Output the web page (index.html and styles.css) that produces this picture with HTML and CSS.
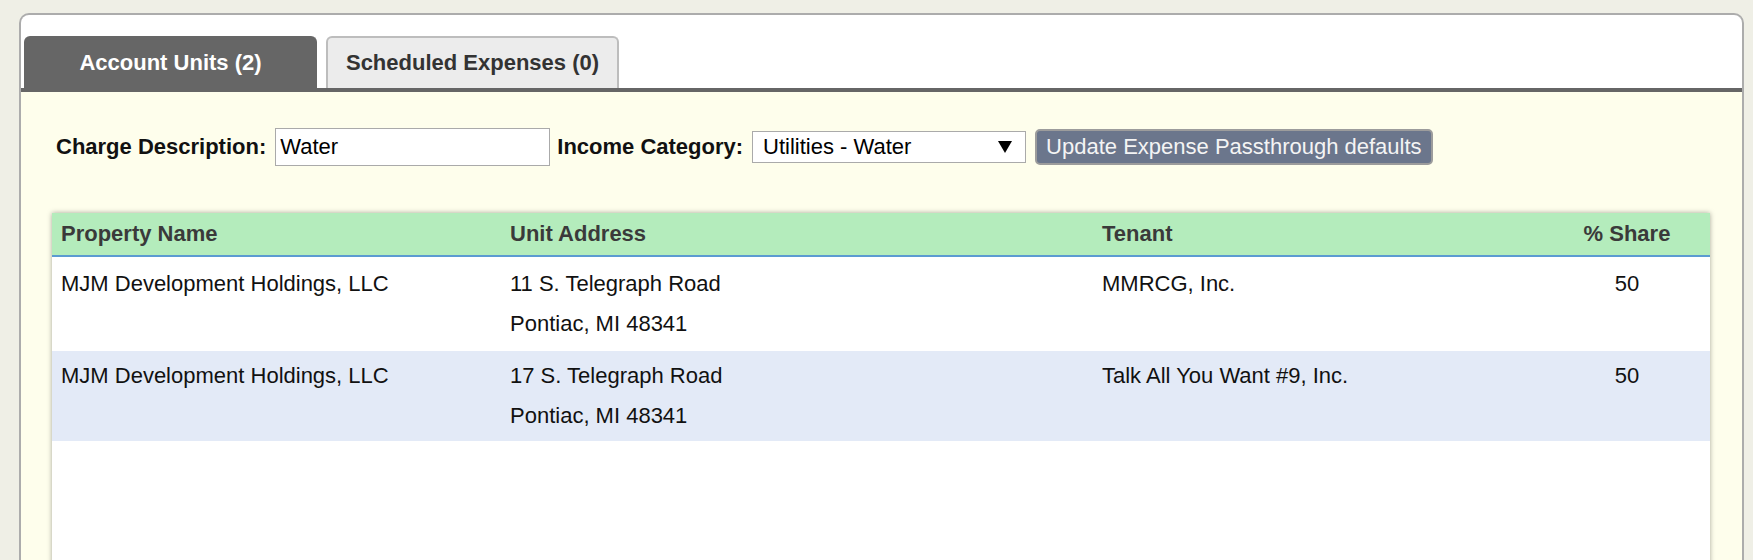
FILE: index.html
```html
<!DOCTYPE html>
<html lang="en">
<head>
<meta charset="utf-8">
<title>Account Units</title>
<link rel="stylesheet" href="styles.css">
</head>
<body>
<div class="panel">
  <div class="tabs">
    <div class="tab active">Account Units (2)</div>
    <div class="tab">Scheduled Expenses (0)</div>
  </div>
  <div class="content">
    <div class="form-row">
      <label class="lbl">Charge Description:</label>
      <input class="text-input" type="text" value="Water">
      <label class="lbl">Income Category:</label>
      <div class="select">
        <span>Utilities - Water</span>
        <svg class="arrow" width="14" height="12" viewBox="0 0 14 12"><polygon points="0,0 14,0 7,12" fill="#000"/></svg>
      </div>
      <button class="btn" type="button">Update Expense Passthrough defaults</button>
    </div>
    <div class="grid">
      <div class="row head">
        <div class="cell">Property Name</div>
        <div class="cell">Unit Address</div>
        <div class="cell">Tenant</div>
        <div class="cell share">% Share</div>
      </div>
      <div class="row body first">
        <div class="cell">MJM Development Holdings, LLC</div>
        <div class="cell">11 S. Telegraph Road<br>Pontiac, MI 48341</div>
        <div class="cell">MMRCG, Inc.</div>
        <div class="cell share">50</div>
      </div>
      <div class="row body alt">
        <div class="cell">MJM Development Holdings, LLC</div>
        <div class="cell">17 S. Telegraph Road<br>Pontiac, MI 48341</div>
        <div class="cell">Talk All You Want #9, Inc.</div>
        <div class="cell share">50</div>
      </div>
    </div>
  </div>
</div>
</body>
</html>
```
FILE: styles.css
```css
html, body {
  margin: 0;
  padding: 0;
}
body {
  background: #efefe6;
  font-family: "Liberation Sans", Arial, sans-serif;
  font-size: 22px;
  overflow: hidden;
}
.panel {
  margin: 13px 9px 0 19px;
  border: 2px solid #acacac;
  border-bottom: none;
  border-radius: 10px 10px 0 0;
  background: #fff;
  overflow: hidden;
}
.tabs {
  display: flex;
  gap: 9px;
  padding: 21px 0 0 3px;
  border-bottom: 4px solid #666;
}
.tab {
  width: 293px;
  height: 52px;
  box-sizing: border-box;
  display: flex;
  align-items: center;
  justify-content: center;
  font-weight: bold;
  color: #333;
  background: #ececec;
  border: 2px solid #bdbdbd;
  border-bottom: none;
  border-radius: 6px 6px 0 0;
}
.tab.active {
  background: #666;
  border-color: #666;
  color: #fff;
}
.content {
  background: #fefeec;
  padding: 36px 32px 0 31px;
}
.form-row {
  display: flex;
  align-items: center;
  padding-left: 4px;
  margin-bottom: 47px;
}
.lbl {
  font-weight: bold;
  color: #111;
  margin-right: 9px;
}
.text-input {
  width: 275px;
  height: 38px;
  box-sizing: border-box;
  border: 1px solid #aaa;
  padding: 0 4px;
  font-family: inherit;
  font-size: 22px;
  color: #000;
  background: #fff;
  margin: 0 7px 0 0;
}
.select {
  width: 274px;
  height: 32px;
  box-sizing: border-box;
  border: 1px solid #aaa;
  background: #fff;
  display: flex;
  align-items: center;
  justify-content: space-between;
  padding: 0 13px 0 10px;
  margin-right: 9px;
  color: #000;
}
.arrow {
  display: block;
}
.btn {
  height: 36px;
  box-sizing: border-box;
  padding: 0 9px;
  border: 2px solid #9c9c9c;
  border-radius: 5px;
  background: #6b768c;
  color: #f4f4f4;
  font-family: inherit;
  font-size: 22px;
  line-height: 1;
}
.grid {
  background: #fff;
  box-shadow: 0 0 5px rgba(0, 0, 0, 0.35);
  min-height: 420px;
}
.row {
  display: grid;
  grid-template-columns: 449fr 592fr 451fr 166fr;
}
.cell {
  padding: 0 9px;
}
.head {
  background: #b4ecbc;
  border-bottom: 2px solid #5b9bd1;
  line-height: 42px;
  font-weight: bold;
  color: #3a3a3a;
}
.body {
  padding: 7px 0 5px;
  line-height: 40px;
  color: #111;
}
.body.first {
  padding-bottom: 7px;
}
.body.alt {
  padding-top: 5px;
  padding-bottom: 5px;
}
.alt {
  background: #e3eaf7;
}
.share {
  text-align: center;
}
```
